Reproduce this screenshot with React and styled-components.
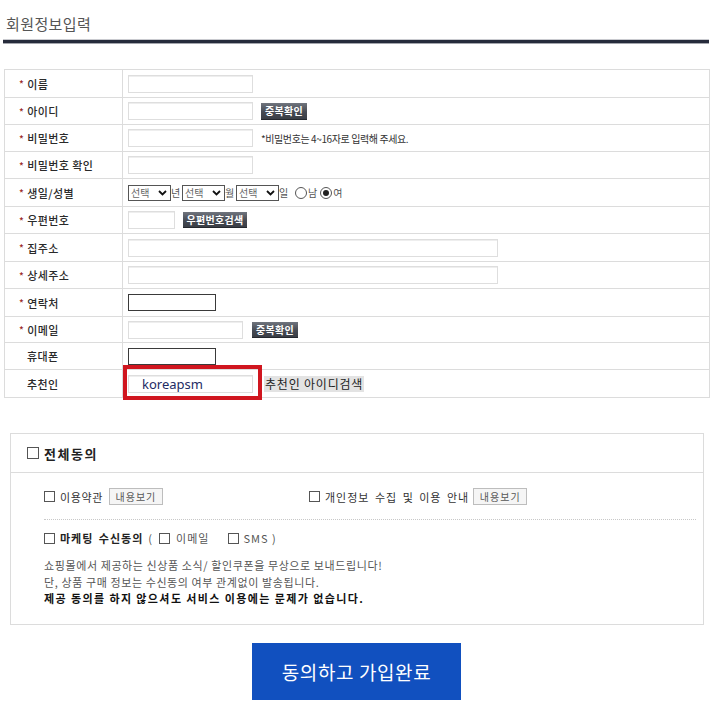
import React from "react";
import styled, { createGlobalStyle } from "styled-components";

const Global = createGlobalStyle`
  html, body { margin: 0; padding: 0; background: #fff; }
  body { font-family: "Noto Sans CJK KR", "Noto Sans", sans-serif; color: #333; }
  * { box-sizing: border-box; }
`;

const Page = styled.div`
  width: 720px;
  padding: 14px 11px 22px 3px;
`;

const Title = styled.h2`
  margin: 0 0 0 3px;
  font-size: 15px;
  line-height: 20px;
  font-weight: 400;
  letter-spacing: 0.4px;
  color: #555;
`;

const Rule = styled.div`
  margin-top: 6px;
  height: 3px;
  background: #262b3b;
  box-shadow: 0 1px 0 #a4a6ad, 0 -1px 0 #c9cacf;
`;

const Table = styled.div`
  margin: 26px 0 0 1px;
  width: 706px;
  border: 1px solid #dcdcdc;
  border-bottom: none;
`;

const Row = styled.div`
  display: grid;
  grid-template-columns: 118px 1fr;
  height: ${(p) => p.$h}px;
  border-bottom: 1px solid #dcdcdc;
`;

const Label = styled.div`
  display: flex;
  align-items: center;
  padding-left: ${(p) => (p.$req ? 14 : 22)}px;
  border-right: 1px solid #dcdcdc;
  font-size: 11px;
  font-weight: 500;
  color: #2a2a2a;
  letter-spacing: 0.4px;
`;

const Star = styled.span`
  color: #9b2a2a;
  font-size: 10px;
  margin-right: 3px;
`;

const Cell = styled.div`
  display: flex;
  align-items: center;
  padding-left: 5px;
  font-size: 11px;
`;

const Input = styled.input`
  width: ${(p) => p.$w}px;
  height: 18px;
  margin: 0;
  padding: 0 0 0 ${(p) => p.$pl || 2}px;
  border: 1px solid #dedede;
  box-shadow: inset 0 1px 0 #eee;
  background: #fff;
  font-family: "Noto Sans", sans-serif;
  font-size: 13px;
  color: #1d2b64;
  outline: none;
`;

const DarkInput = styled.input`
  width: 88px;
  height: 17px;
  margin: 0;
  padding: 0;
  border: 1px solid #3a3a3a;
  background: #fff;
  outline: none;
`;

const DarkButton = styled.span`
  display: inline-flex;
  align-items: center;
  justify-content: center;
  margin-left: ${(p) => p.$ml || 8}px;
  width: ${(p) => p.$w}px;
  height: ${(p) => p.$h || 17}px;
  background: linear-gradient(#70757e, #474b54 55%, #3a3e46);
  border-bottom: 1px solid #25282e;
  color: #fff;
  font-size: 10px;
  font-weight: 700;
  letter-spacing: 0.3px;
`;

const Hint = styled.span`
  margin-left: 8px;
  font-size: 10px;
  letter-spacing: -0.4px;
  color: #333;
`;

const FakeSelect = styled.span`
  display: inline-flex;
  align-items: center;
  justify-content: space-between;
  width: 43px;
  height: 16px;
  padding: 0 3px 0 2px;
  border: 1px solid #555;
  font-size: 10px;
  color: #666;
`;

const Unit = styled.span`
  width: 11px;
  font-size: 10px;
  color: #555;
`;

const RadioGroup = styled.span`
  display: inline-flex;
  align-items: center;
  margin-left: ${(p) => p.$ml}px;
  font-size: 10px;
  color: #555;
`;

const Radio = styled.span`
  position: relative;
  display: inline-block;
  width: 12px;
  height: 12px;
  margin-right: 1px;
  border: 1px solid #555;
  border-radius: 50%;
  background: #fff;
  &::after {
    content: "";
    display: ${(p) => (p.$on ? "block" : "none")};
    position: absolute;
    left: 2px;
    top: 2px;
    width: 6px;
    height: 6px;
    border-radius: 50%;
    background: #222;
  }
`;

const Highlight = styled.span`
  position: relative;
  display: inline-flex;
  margin-top: 1px;
  &::after {
    content: "";
    position: absolute;
    top: -10px;
    left: -5px;
    right: -9px;
    bottom: -7px;
    border: 4px solid #d0161f;
    pointer-events: none;
  }
`;

const SearchLabel = styled.span`
  margin-left: 11px;
  margin-top: 1px;
  height: 16px;
  line-height: 16px;
  padding: 0 1px;
  background: #e3e3e3;
  font-size: 12px;
  letter-spacing: 0.8px;
  color: #222;
`;

const AgreeBox = styled.div`
  margin: 35px 5px 0 7px;
  border: 1px solid #dcdcdc;
`;

const AgreeHead = styled.div`
  display: flex;
  align-items: center;
  height: 39px;
  padding-left: 16px;
  border-bottom: 1px solid #dcdcdc;
  font-size: 13px;
  font-weight: 700;
  color: #222;
  letter-spacing: 1.5px;
`;

const Check = styled.span`
  display: inline-block;
  flex: none;
  width: ${(p) => p.$s || 11}px;
  height: ${(p) => p.$s || 11}px;
  margin-right: ${(p) => p.$mr || 5}px;
  border: 1px solid #555;
  background: #fff;
`;

const AgreeBody = styled.div`
  padding: 15px 7px 17px 33px;
`;

const TermsRow = styled.div`
  display: grid;
  grid-template-columns: 265px 1fr;
  height: 17px;
`;

const Term = styled.div`
  display: flex;
  align-items: center;
  font-size: 11px;
  letter-spacing: ${(p) => p.$ls || 0.6}px;
  word-spacing: ${(p) => p.$ws || 0}px;
  color: #333;
`;

const ViewButton = styled.span`
  display: inline-flex;
  align-items: center;
  justify-content: center;
  margin-left: ${(p) => p.$ml}px;
  width: 54px;
  height: 17px;
  border: 1px solid #bdbdbd;
  background: #f5f5f5;
  font-size: 10px;
  letter-spacing: 1px;
  word-spacing: 0;
  color: #555;
`;

const Dotted = styled.div`
  margin-top: 14px;
  border-top: 1px dotted #c8c8c8;
`;

const MarketRow = styled.div`
  display: flex;
  align-items: center;
  height: 16px;
  margin-top: 10px;
  font-size: 11px;
  color: #444;
  letter-spacing: 1px;
`;

const Strong = styled.span`
  font-weight: 700;
  color: #222;
  word-spacing: 2px;
  margin-right: ${(p) => p.$mr || 0}px;
`;

const Soft = styled.span`
  margin-right: ${(p) => p.$mr || 0}px;
  color: #555;
`;

const Notes = styled.div`
  margin-top: 11px;
  font-size: 11px;
  line-height: 16.5px;
  color: #555;
  letter-spacing: 0.6px;
`;

const NoteStrong = styled.div`
  font-weight: 700;
  font-size: 11px;
  color: #111;
  letter-spacing: 1.4px;
`;

const SubmitWrap = styled.div`
  display: flex;
  justify-content: center;
  margin-top: 18px;
`;

const Submit = styled.button`
  width: 209px;
  height: 57px;
  margin: 0 0 0 1px;
  border: none;
  background: #1150bf;
  color: #fff;
  font-family: "Noto Sans CJK KR", sans-serif;
  font-size: 19px;
  letter-spacing: 0.6px;
  cursor: pointer;
`;

const Chevron = () => (
  <svg width="9" height="6" viewBox="0 0 9 6">
    <path d="M1 1 L4.5 4.5 L8 1" fill="none" stroke="#111" strokeWidth="1.8" />
  </svg>
);

const Select = () => (
  <FakeSelect>
    선택
    <Chevron />
  </FakeSelect>
);

const rows = [
  { label: "이름", req: true, h: 28, body: <Input $w={125} /> },
  {
    label: "아이디",
    req: true,
    h: 27,
    body: (
      <>
        <Input $w={125} />
        <DarkButton $w={46}>중복확인</DarkButton>
      </>
    ),
  },
  {
    label: "비밀번호",
    req: true,
    h: 27,
    body: (
      <>
        <Input $w={125} />
        <Hint>*비밀번호는 4~16자로 입력해 주세요.</Hint>
      </>
    ),
  },
  { label: "비밀번호 확인", req: true, h: 27, body: <Input $w={125} /> },
  {
    label: "생일/성별",
    req: true,
    h: 28,
    body: (
      <>
        <Select />
        <Unit>년</Unit>
        <Select />
        <Unit>월</Unit>
        <Select />
        <Unit>일</Unit>
        <RadioGroup $ml={5}>
          <Radio />남
        </RadioGroup>
        <RadioGroup $ml={3}>
          <Radio $on />여
        </RadioGroup>
      </>
    ),
  },
  {
    label: "우편번호",
    req: true,
    h: 27,
    body: (
      <>
        <Input $w={47} />
        <DarkButton $w={64} $h={16}>우편번호검색</DarkButton>
      </>
    ),
  },
  { label: "집주소", req: true, h: 28, body: <Input $w={370} /> },
  { label: "상세주소", req: true, h: 27, body: <Input $w={370} /> },
  { label: "연락처", req: true, h: 28, body: <DarkInput /> },
  {
    label: "이메일",
    req: true,
    h: 26,
    body: (
      <>
        <Input $w={115} />
        <DarkButton $w={46} $ml={9} $h={16}>중복확인</DarkButton>
      </>
    ),
  },
  { label: "휴대폰", req: false, h: 27, body: <DarkInput /> },
  {
    label: "추천인",
    req: false,
    h: 28,
    body: (
      <>
        <Highlight>
          <Input $w={125} $pl={13} defaultValue="koreapsm" />
        </Highlight>
        <SearchLabel>추천인 아이디검색</SearchLabel>
      </>
    ),
  },
];

export default function App() {
  return (
    <>
      <Global />
      <Page>
        <Title>회원정보입력</Title>
        <Rule />
        <Table>
          {rows.map((r) => (
            <Row key={r.label} $h={r.h}>
              <Label $req={r.req}>
                {r.req && <Star>*</Star>}
                {r.label}
              </Label>
              <Cell>{r.body}</Cell>
            </Row>
          ))}
        </Table>

        <AgreeBox>
          <AgreeHead>
            <Check $s={12} />
            전체동의
          </AgreeHead>
          <AgreeBody>
            <TermsRow>
              <Term>
                <Check />
                이용약관
                <ViewButton $ml={6}>내용보기</ViewButton>
              </Term>
              <Term $ls={1} $ws={2}>
                <Check />
                개인정보 수집 및 이용 안내
                <ViewButton $ml={4}>내용보기</ViewButton>
              </Term>
            </TermsRow>
            <Dotted />
            <MarketRow>
              <Check />
              <Strong $mr={5}>마케팅 수신동의</Strong>
              <Soft $mr={6}>(</Soft>
              <Check $mr={6} />
              <Soft $mr={19}>이메일</Soft>
              <Check $mr={4} />
              <Soft>SMS )</Soft>
            </MarketRow>
            <Notes>
              <div>쇼핑몰에서 제공하는 신상품 소식/ 할인쿠폰을 무상으로 보내드립니다!</div>
              <div>단, 상품 구매 정보는 수신동의 여부 관계없이 발송됩니다.</div>
              <NoteStrong>제공 동의를 하지 않으셔도 서비스 이용에는 문제가 없습니다.</NoteStrong>
            </Notes>
          </AgreeBody>
        </AgreeBox>

        <SubmitWrap>
          <Submit>동의하고 가입완료</Submit>
        </SubmitWrap>
      </Page>
    </>
  );
}
